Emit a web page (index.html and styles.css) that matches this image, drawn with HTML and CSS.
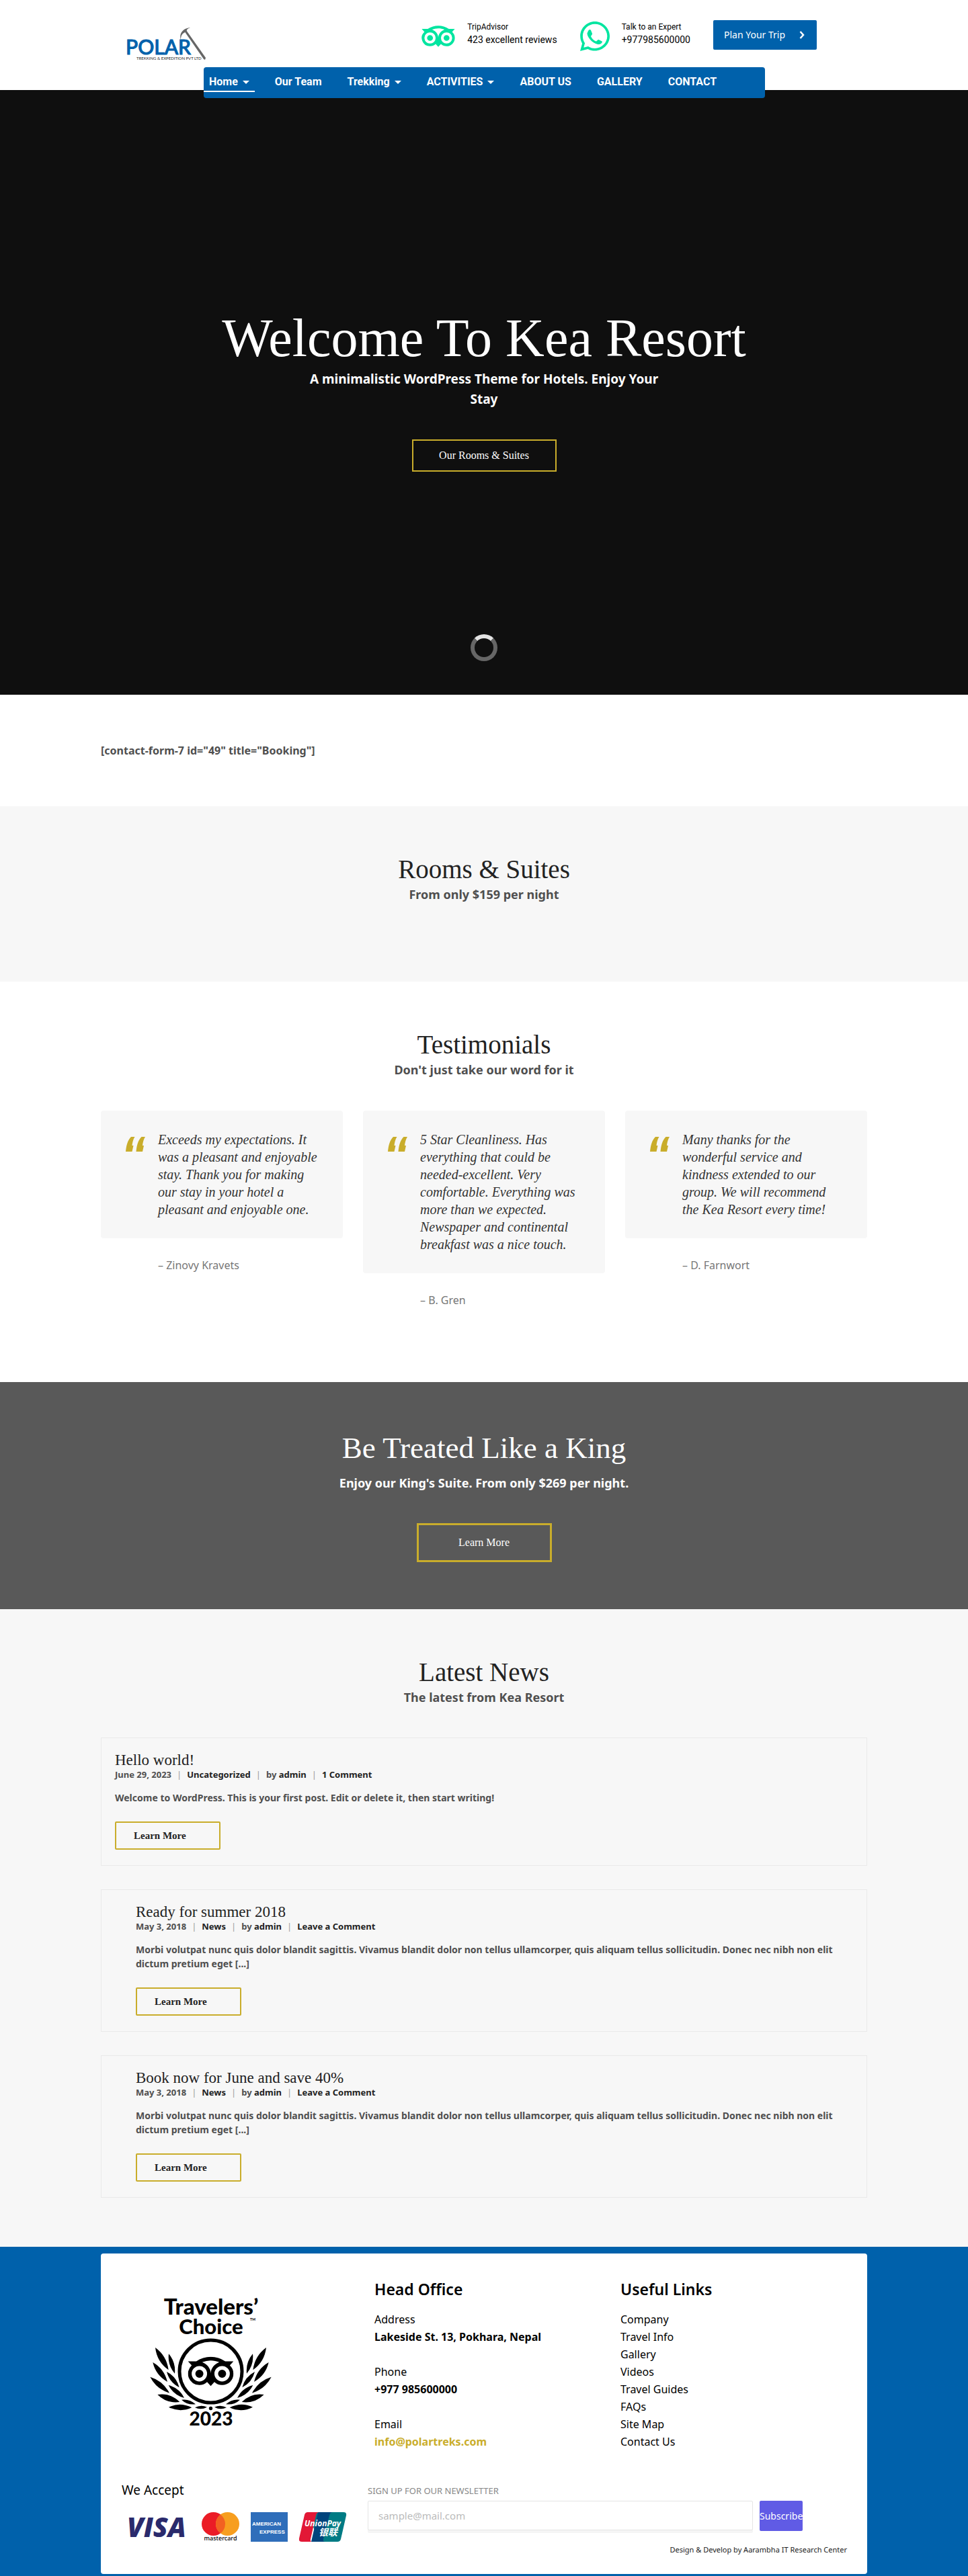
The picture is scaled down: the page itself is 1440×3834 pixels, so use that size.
FILE: index.html
```html
<!DOCTYPE html>
<html lang="en">
<head>
<meta charset="utf-8">
<meta name="viewport" content="width=device-width, initial-scale=1">
<title>Polar Trekking &amp; Expedition</title>
<link rel="stylesheet" href="styles.css">
</head>
<body>
<svg width="0" height="0" class="defs" aria-hidden="true">
  <symbol id="owl" viewBox="0 4.2 24 15.6">
    <path d="M12.006 4.295c-2.67 0-5.338.784-7.645 2.353H0l1.963 2.135a5.997 5.997 0 0 0 4.04 10.43 5.976 5.976 0 0 0 4.075-1.6L12 19.705l1.922-2.09a5.972 5.972 0 0 0 4.072 1.598 6 6 0 0 0 6-5.998 5.982 5.982 0 0 0-1.957-4.432L24 6.648h-4.35a13.573 13.573 0 0 0-7.644-2.353zM12 6.255c1.531 0 3.063.303 4.504.903C13.943 8.138 12 10.43 12 13.1c0-2.671-1.942-4.962-4.504-5.942A11.72 11.72 0 0 1 12 6.256zM6.002 9.157a4.059 4.059 0 1 1 0 8.118 4.059 4.059 0 0 1 0-8.118zm11.992.002a4.057 4.057 0 1 1 .003 8.115 4.057 4.057 0 0 1-.003-8.115zm-11.992 1.93a2.128 2.128 0 0 0 0 4.256 2.128 2.128 0 0 0 0-4.256zm11.992 0a2.128 2.128 0 0 0 0 4.256 2.128 2.128 0 0 0 0-4.256z"/>
  </symbol>
  <symbol id="quote" viewBox="0 0 29 22">
    <path d="M0 22C1 12 3 5 8 0h5.500C11 4 10 8 9.500 13h2L9.500 22zM15.500 22c1-10 3-17 8-22H29c-2.500 4-3.500 8-4 13h2l-2 9z"/>
  </symbol>
  <symbol id="laurel" viewBox="0 0 801 690">
    <path d="M153 282Q204 319 212 382Q160 345 153 282ZM213 310Q245 348 240 398Q207 360 213 310ZM142 348Q193 377 207 435Q155 405 142 348ZM204 390Q248 413 260 460Q216 437 204 390ZM130 413Q188 431 216 485Q158 467 130 413ZM212 450Q260 462 282 507Q234 494 212 450ZM163 492Q220 483 262 525Q204 533 163 492ZM270 515Q306 510 333 535Q296 540 270 515ZM213 548Q264 524 316 550Q264 574 213 548ZM330 550Q357 536 384 548Q357 562 330 550Z"/>
  </symbol>
</svg>

<header class="header">
  <div class="container topbar">
    <a class="logo" href="#" aria-label="Polar Trekking">
      <svg width="120" height="58" viewBox="0 0 120 58">
        <text x="0" y="41" class="logo-name">POLAR</text>
        <text x="16" y="49" class="logo-tag">TREKKING &amp; EXPEDITION PVT LTD</text>
        <path d="M87 6 90 5 119 46 118 49 116 48Z" fill="#666"/>
        <path d="M96 1C86 2 79 9 82 19 82 13 84 9 91 7 90 4 92 3 96 1Z" fill="#666"/>
      </svg>
    </a>
    <div class="contacts">
      <div class="contact">
        <svg width="50" height="32" class="mint"><use href="#owl"/></svg>
        <p><span class="contact-label">TripAdvisor</span><span class="contact-value">423 excellent reviews</span></p>
      </div>
      <div class="contact">
        <svg width="44" height="44" viewBox="0 0 44 44" class="mint">
          <g transform="scale(.0982) translate(0 -32)"><path d="M380.900 97.100C339 55.100 283.200 32 223.900 32c-122.400 0-222 99.600-222 222 0 39.100 10.200 77.300 29.600 111L0 480l117.700-30.900c32.400 17.700 68.900 27 106.100 27h.1c122.300 0 224.100-99.600 224.100-222 0-59.300-25.200-115-67.100-157zm-157 341.600c-33.200 0-65.700-8.900-94-25.700l-6.700-4-69.800 18.300L72 359.200l-4.400-7c-18.500-29.400-28.200-63.300-28.200-98.200 0-101.700 82.800-184.500 184.600-184.500 49.300 0 95.600 19.200 130.400 54.100 34.800 34.900 56.200 81.200 56.100 130.500 0 101.800-84.900 184.600-186.600 184.600z"/></g>
          <path d="M12 14C13 12 15 11 16 13L18 18C18.500 19.500 16 21 16 22C17.500 25.500 20 28 23.500 29.500C25 29.500 26 26.500 27.500 27L32.500 29.500C34 30.500 31 34 28 34C20 34 10.500 24 10.500 17.500Z"/>
        </svg>
        <p><span class="contact-label">Talk to an Expert</span><span class="contact-value">+977985600000</span></p>
      </div>
      <a class="plan" href="#">Plan Your Trip
        <svg width="8" height="12" viewBox="0 0 8 12"><path d="M1.500 1 6 6 1.500 11" fill="none" stroke="#fff" stroke-width="2.500"/></svg>
      </a>
    </div>
  </div>
  <div class="container nav-row">
    <nav class="nav">
      <a class="active" href="#">Home <i class="caret"></i></a>
      <a href="#">Our Team</a>
      <a href="#">Trekking <i class="caret"></i></a>
      <a href="#">ACTIVITIES <i class="caret"></i></a>
      <a href="#">ABOUT US</a>
      <a href="#">GALLERY</a>
      <a href="#">CONTACT</a>
    </nav>
  </div>
</header>

<main>
  <section class="hero">
    <h1>Welcome To Kea Resort</h1>
    <p>A minimalistic WordPress Theme for Hotels. Enjoy Your Stay</p>
    <a class="btn hero-btn" href="#">Our Rooms &amp; Suites</a>
    <span class="spinner"></span>
  </section>

  <section class="booking">
    <p class="container">[contact-form-7 id="49" title="Booking"]</p>
  </section>

  <section class="section rooms">
    <h2>Rooms &amp; Suites</h2>
    <p class="lead">From only $159 per night</p>
  </section>

  <section class="section testimonials">
    <h2>Testimonials</h2>
    <p class="lead">Don't just take our word for it</p>
    <div class="container quotes">
      <figure>
        <blockquote><svg width="29" height="22"><use href="#quote"/></svg><p>Exceeds my expectations. It was a pleasant and enjoyable stay. Thank you for making our stay in your hotel a pleasant and enjoyable one.</p></blockquote>
        <figcaption>– Zinovy Kravets</figcaption>
      </figure>
      <figure>
        <blockquote><svg width="29" height="22"><use href="#quote"/></svg><p>5 Star Cleanliness. Has everything that could be needed-excellent. Very comfortable. Everything was more than we expected. Newspaper and continental breakfast was a nice touch.</p></blockquote>
        <figcaption>– B. Gren</figcaption>
      </figure>
      <figure>
        <blockquote><svg width="29" height="22"><use href="#quote"/></svg><p>Many thanks for the wonderful service and kindness extended to our group. We will recommend the Kea Resort every time!</p></blockquote>
        <figcaption>– D. Farnwort</figcaption>
      </figure>
    </div>
  </section>

  <section class="section king">
    <h2>Be Treated Like a King</h2>
    <p class="lead">Enjoy our King's Suite. From only $269 per night.</p>
    <a class="btn king-btn" href="#">Learn More</a>
  </section>

  <section class="section news">
    <h2>Latest News</h2>
    <p class="lead">The latest from Kea Resort</p>
    <div class="container posts">
      <article class="post">
        <h3>Hello world!</h3>
        <p class="meta"><span>June 29, 2023</span><i>|</i><a href="#">Uncategorized</a><i>|</i><span>by <a href="#">admin</a></span><i>|</i><a href="#">1 Comment</a></p>
        <p class="excerpt">Welcome to WordPress. This is your first post. Edit or delete it, then start writing!</p>
        <a class="btn post-btn" href="#">Learn More</a>
      </article>
      <article class="post inset">
        <h3>Ready for summer 2018</h3>
        <p class="meta"><span>May 3, 2018</span><i>|</i><a href="#">News</a><i>|</i><span>by <a href="#">admin</a></span><i>|</i><a href="#">Leave a Comment</a></p>
        <p class="excerpt">Morbi volutpat nunc quis dolor blandit sagittis. Vivamus blandit dolor non tellus ullamcorper, quis aliquam tellus sollicitudin. Donec nec nibh non elit dictum pretium eget [...]</p>
        <a class="btn post-btn" href="#">Learn More</a>
      </article>
      <article class="post inset">
        <h3>Book now for June and save 40%</h3>
        <p class="meta"><span>May 3, 2018</span><i>|</i><a href="#">News</a><i>|</i><span>by <a href="#">admin</a></span><i>|</i><a href="#">Leave a Comment</a></p>
        <p class="excerpt">Morbi volutpat nunc quis dolor blandit sagittis. Vivamus blandit dolor non tellus ullamcorper, quis aliquam tellus sollicitudin. Donec nec nibh non elit dictum pretium eget [...]</p>
        <a class="btn post-btn" href="#">Learn More</a>
      </article>
    </div>
  </section>
</main>

<footer class="footer">
  <div class="container panel">
    <div class="columns">
      <div class="badge">
        <svg width="182" height="200" viewBox="43 15 182 200">
          <g class="badge-text">
            <text x="134" y="45" font-size="33">Travelers’</text>
            <text x="134" y="74" font-size="31">Choice</text>
            <text x="134" y="210" font-size="28">2023</text>
            <text x="196" y="54" font-size="5">TM</text>
          </g>
          <circle cx="133.500" cy="129.500" r="46.500" fill="none" stroke="#000" stroke-width="5"/>
          <use href="#owl" x="99.500" y="107.500" width="68" height="44"/>
          <use href="#laurel" width="267" height="230"/>
          <g transform="translate(267 0) scale(-1 1)"><use href="#laurel" width="267" height="230"/></g>
          <circle cx="133.500" cy="184.500" r="2.700"/>
        </svg>
      </div>
      <div>
        <h4>Head Office</h4>
        <dl>
          <dt>Address</dt><dd>Lakeside St. 13, Pokhara, Nepal</dd>
          <dt>Phone</dt><dd>+977 985600000</dd>
          <dt>Email</dt><dd><a href="#">info@polartreks.com</a></dd>
        </dl>
      </div>
      <div>
        <h4>Useful Links</h4>
        <ul>
          <li><a href="#">Company</a></li>
          <li><a href="#">Travel Info</a></li>
          <li><a href="#">Gallery</a></li>
          <li><a href="#">Videos</a></li>
          <li><a href="#">Travel Guides</a></li>
          <li><a href="#">FAQs</a></li>
          <li><a href="#">Site Map</a></li>
          <li><a href="#">Contact Us</a></li>
        </ul>
      </div>
    </div>
    <div class="bottom">
      <div class="accept">
        <h5>We Accept</h5>
        <div class="cards">
          <svg width="95" height="44" viewBox="0 0 95 44"><text x="1" y="37" class="visa">VISA</text></svg>
          <svg width="56" height="44" viewBox="0 0 56 44">
            <circle cx="17.500" cy="17.500" r="17.500" fill="#eb1c26"/><circle cx="38.500" cy="17.500" r="17.500" fill="#f79e1f"/>
            <path d="M28 3.500a17.500 17.500 0 0 1 0 28 17.500 17.500 0 0 1 0-28z" fill="#f26122"/>
            <text x="28" y="42" class="mc">mastercard</text>
          </svg>
          <svg width="55" height="44" viewBox="0 0 55 44"><rect width="55" height="44" fill="#2f6eba"/><text x="2" y="20" class="amex">AMERICAN</text><text x="13" y="32" class="amex">EXPRESS</text></svg>
          <svg width="71" height="44" viewBox="0 0 71 44">
            <path d="M12 0H66Q71 0 70 5L62 40Q61 44 57 44H30z" fill="#007b84"/>
            <path d="M28 0H50Q46 0 45 5L36 40Q35 44 39 44H18z" fill="#00447c"/>
            <path d="M13 0H30Q26 0 25 5L17 40Q16 44 20 44H4Q-1 44 0 39L8 4Q9 0 13 0z" fill="#e21836"/>
            <text x="8" y="21" class="up">UnionPay</text><text x="29" y="35" class="up cjk" lang="zh">银联</text>
          </svg>
        </div>
      </div>
      <form class="newsletter">
        <label for="email">SIGN UP FOR OUR NEWSLETTER</label>
        <div class="fields">
          <input id="email" type="email" placeholder="sample@mail.com">
          <button type="button">Subscribe</button>
        </div>
        <p class="credit">Design &amp; Develop by Aarambha IT Research Center</p>
      </form>
    </div>
  </div>
</footer>
</body>
</html>
```
FILE: styles.css
```css
* { box-sizing: border-box; }

body {
  margin: 0;
  background: #fff;
  color: #4f4f4f;
  font: 700 16px/26px "Noto Sans", sans-serif;
}

h1, h2, h3, h4, h5, p, ul, dl, dd, figure, blockquote { margin: 0; padding: 0; }
ul { list-style: none; }
a { color: inherit; text-decoration: none; }
svg { display: block; flex: none; }
.defs { position: absolute; }
.container { width: 100%; max-width: 1140px; margin: 0 auto; }

/* Header */
.header { position: relative; z-index: 1; height: 134px; background: #fff; }
.topbar { display: flex; justify-content: space-between; align-items: flex-start; height: 100px; padding: 30px 75px 0 37px; }
.logo { padding-top: 10px; }
.logo-name { font: 500 30px Lato, sans-serif; fill: #0061ab; stroke: #0061ab; stroke-width: 1; }
.logo-tag { font: 400 6px Lato, sans-serif; fill: #222; }
.contacts { display: flex; align-items: flex-start; gap: 34px; }
.contact { display: flex; align-items: center; gap: 18px; height: 48px; color: #000; font: 400 14px/19px Roboto, sans-serif; }
.contact p { height: 46px; }
.contact span { display: block; }
.contact-label { font-size: 12px; }
.mint { fill: #00e5a0; }
.plan { display: flex; align-items: center; justify-content: space-between; width: 154px; height: 44px; padding: 0 18px 0 16px; border-radius: 2px; background: #0061ab; color: #fff; font-size: 14px; font-weight: 400; }
.nav-row { padding: 0 152px 0 153px; }
.nav { display: flex; gap: 22px; height: 46px; border-radius: 4px; background: #0061ab; color: #fff; font: 700 16px/26px Roboto, sans-serif; }
.nav a { display: flex; align-items: center; gap: 7px; height: 37px; padding: 9px 8px 0; border-bottom: 2px solid transparent; white-space: nowrap; }
.nav .active { border-color: #fff; }
.caret { border: 5px solid transparent; border-top-color: #fff; border-bottom: 0; }

/* Hero */
.hero { position: relative; display: flex; flex-direction: column; align-items: center; min-height: 900px; padding-top: 329px; background: #0f0f0f; color: #fff; text-align: center; }
.hero h1 { font: 400 80px/80px "Liberation Serif", serif; }
.hero p { max-width: 540px; margin: 6px 0 45px; font-size: 19px; line-height: 30px; }
.btn { display: inline-flex; align-items: center; justify-content: center; border: 2px solid #c9ad2b; font-family: "Liberation Serif", serif; }
.hero-btn { width: 215px; height: 48px; font-size: 16px; font-weight: 400; }
.spinner { position: absolute; bottom: 50px; left: 50%; width: 40px; height: 40px; margin-left: -20px; border: 6px solid #666; border-top-color: #e3e3e3; border-radius: 50%; }

/* Page sections */
.booking { padding: 70px 0; }
.section { padding-top: 71px; text-align: center; }
.section h2 { color: #222; font: 400 39px/46px "Liberation Serif", serif; }
.lead { font-size: 18px; line-height: 28px; }
.rooms { padding-bottom: 116px; background: #f7f7f7; }

.testimonials { padding-bottom: 109px; }
.quotes { display: grid; grid-template-columns: repeat(3, 1fr); gap: 30px; align-items: start; margin-top: 47px; text-align: left; }
blockquote { display: flex; align-items: flex-start; gap: 19px; padding: 30px 37px; border-radius: 4px; background: #f7f7f7; color: #333; font: italic 400 20px/26px "Liberation Serif", serif; }
blockquote svg { margin-top: 9px; fill: #c9ad2b; }
figcaption { margin-top: 27px; padding-left: 85px; color: #777; font-weight: 400; }

.king { padding-bottom: 70px; background: #595959; color: #fff; }
.king h2 { margin-bottom: 11px; color: #fff; font-size: 45px; line-height: 54px; }
.king-btn { width: 201px; height: 58px; margin-top: 46px; border-width: 3px; font-size: 16px; font-weight: 400; vertical-align: top; }

.news { padding-bottom: 73px; background: #f7f7f7; }
.posts { display: grid; gap: 35px; margin-top: 46px; text-align: left; }
.post { padding: 20px 20px 23px; border: 1px solid #e9e9e9; }
.post.inset { padding-left: 51px; padding-right: 39px; }
.post h3 { color: #222; font: 400 23px/26px "Liberation Serif", serif; }
.meta { display: flex; gap: 8px; font-size: 13px; line-height: 16px; }
.meta a { color: #222; }
.meta i { color: #999; font-style: normal; font-weight: 400; }
.excerpt { margin: 16px 0 25px; font-size: 14px; line-height: 21px; }
.post-btn { justify-content: flex-start; width: 157px; height: 42px; padding-left: 26px; border-radius: 2px; color: #222; font-size: 15px; vertical-align: top; }

/* Footer */
.footer { padding: 10px 0 3px; background: #0061ab; color: #000; }
.panel { padding: 37px 30px 26px 31px; border-radius: 4px; background: #fff; }
.columns { display: grid; grid-template-columns: 366px 366px 1fr; padding-left: 10px; }
.badge { padding: 24px 0 0 32px; }
.badge-text { font-family: Lato, sans-serif; font-weight: 900; text-anchor: middle; }
h4 { margin-bottom: 16px; font-size: 23px; font-weight: 600; line-height: 32px; }
.columns ul, dt { font-weight: 400; }
dd + dt { margin-top: 26px; }
dd a { color: #c9ad2b; }
.bottom { display: grid; grid-template-columns: 366px 1fr; margin-top: 46px; }
h5 { font-size: 19px; font-weight: 400; line-height: 26px; }
.cards { display: flex; gap: 17px; margin-top: 20px; padding-left: 7px; }
.visa { font: italic 800 40px "Open Sans", sans-serif; fill: #2a2a6c; }
.mc { font: 500 9px "Noto Sans", sans-serif; text-anchor: middle; }
.amex { font: 700 8px "Liberation Sans", sans-serif; fill: #fff; }
.up { font: italic 700 12px "Noto Sans", sans-serif; fill: #fff; }
.cjk { font: italic 700 14px "Noto Sans CJK SC", sans-serif; }
.newsletter { padding-top: 4px; font-weight: 400; }
.newsletter label { display: block; margin-bottom: 5px; color: #888; font-size: 13px; line-height: 20px; }
.fields { display: flex; gap: 10px; }
.fields input { width: 573px; height: 44px; padding: 0 15px; border: 1px solid #e5e5e5; border-radius: 2px; box-shadow: 0 4px 0 #f5f5f5; font: 400 15px "Noto Sans", sans-serif; }
.fields input::placeholder { color: #bbb; }
.fields button { height: 45px; padding: 0; border: 0; border-radius: 2px; background: #605be5; color: #fff; font: 400 14px "Noto Sans", sans-serif; }
.credit { margin-top: 18px; color: #222; font-size: 11px; line-height: 20px; text-align: right; }
```
